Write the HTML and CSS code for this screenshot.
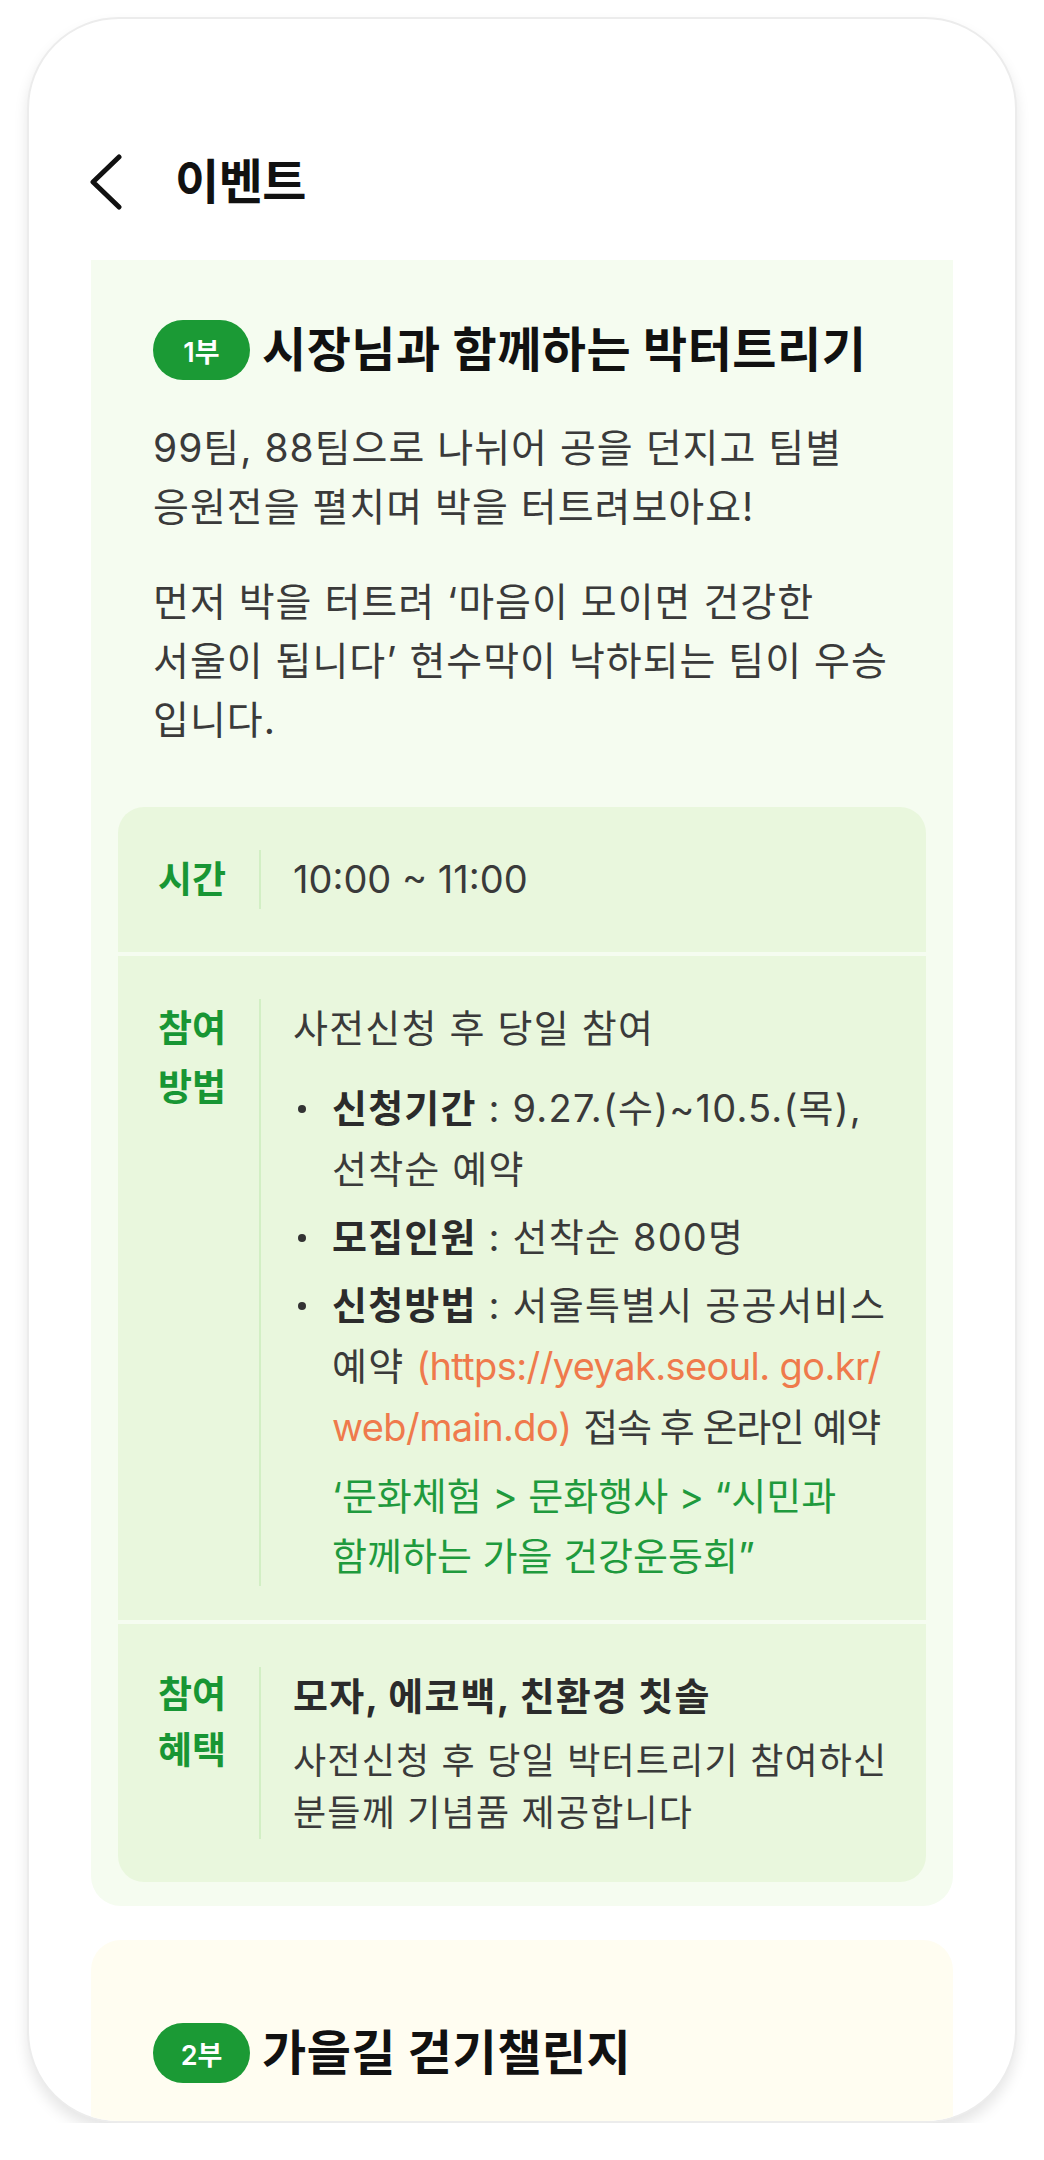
FILE: index.html
```html
<!DOCTYPE html>
<html lang="ko">
<head>
<meta charset="utf-8">
<title>이벤트</title>
<link rel="stylesheet" href="styles.css">
</head>
<body>
<div class="phone">
  <header class="topbar">
    <svg class="back" width="40" height="56" viewBox="0 0 40 56" aria-hidden="true">
      <path d="M33 3 L7 28 L33 53" fill="none" stroke="#111" stroke-width="5" stroke-linecap="round" stroke-linejoin="round"/>
    </svg>
    <h1 class="page-title">이벤트</h1>
  </header>
  <main class="content">
    <section class="card card-green">
      <div class="card-head">
        <span class="pill">1부</span>
        <h2 class="card-title">시장님과 함께하는 박터트리기</h2>
      </div>
      <div class="intro">
        <p>99팀, 88팀으로 나뉘어 공을 던지고 팀별<br>응원전을 펼치며 박을 터트려보아요!</p>
        <p>먼저 박을 터트려 ‘마음이 모이면 건강한<br>서울이 됩니다’ 현수막이 낙하되는 팀이 우승<br>입니다.</p>
      </div>
      <div class="info">
        <div class="info-row">
          <div class="info-label">시간</div>
          <div class="info-value"><span class="time">10:00 ~ 11:00</span></div>
        </div>
        <div class="info-row row-method">
          <div class="info-label">참여<br>방법</div>
          <div class="info-value">
            <p>사전신청 후 당일 참여</p>
            <ul class="bullets">
              <li><span class="dot"></span><span class="li-text"><b>신청기간</b> : 9.27.(수)~10.5.(목),<br>선착순 예약</span></li>
              <li><span class="dot"></span><span class="li-text"><b>모집인원</b> : 선착순 800명</span></li>
              <li><span class="dot"></span><span class="li-text"><b>신청방법</b> : 서울특별시 공공서비스<br>예약 <span class="url">(https://yeyak.seoul. go.kr/<br>web/main.do)</span> <span class="tight">접속 후 온라인 예약</span></span></li>
            </ul>
            <p class="note">‘문화체험 &gt; 문화행사 &gt; “시민과<br>함께하는 가을 건강운동회”</p>
          </div>
        </div>
        <div class="info-row">
          <div class="info-label label-tight">참여<br>혜택</div>
          <div class="info-value">
            <p class="benefit">모자, 에코백, 친환경 칫솔</p>
            <p class="benefit-desc">사전신청 후 당일 박터트리기 참여하신<br>분들께 기념품 제공합니다</p>
          </div>
        </div>
      </div>
    </section>
    <section class="card card-cream">
      <div class="card-head">
        <span class="pill">2부</span>
        <h2 class="card-title">가을길 걷기챌린지</h2>
      </div>
    </section>
  </main>
</div>
</body>
</html>
```

FILE: styles.css
```css
* { box-sizing: border-box; }

html, body {
  margin: 0;
  padding: 0;
  background: #ffffff;
}

body {
  font-family: Inter, "Noto Sans CJK KR", sans-serif;
  color: #333333;
  overflow: hidden;
}

.phone {
  width: 990px;
  height: 2106px;
  margin: 17px 0 0 27px;
  border: 2px solid #ececec;
  border-radius: 92px;
  background: #ffffff;
  overflow: hidden;
  box-shadow: 0 8px 14px rgba(0, 0, 0, 0.10);
}

.topbar {
  height: 241px;
  padding: 135px 0 0 57px;
  display: flex;
  align-items: flex-start;
  gap: 49px;
}

.back {
  display: block;
  flex: none;
}

.page-title {
  margin: 0;
  font-size: 48px;
  line-height: 56px;
  font-weight: 700;
  color: #111111;
  letter-spacing: -0.5px;
}

.content {
  padding: 0 62px;
  display: flex;
  flex-direction: column;
  gap: 34px;
}

.card {
  padding: 60px 27px 24px;
}

.card-green {
  background: #f5fcf0;
  border-radius: 0 0 30px 30px;
}

.card-cream {
  background: #fffdf1;
  border-radius: 30px;
  padding-top: 83px;
  padding-bottom: 200px;
}

.card-head {
  padding: 0 35px;
  display: flex;
  align-items: center;
  gap: 12px;
}

.pill {
  flex: none;
  width: 97px;
  height: 60px;
  border-radius: 30px;
  background: #1b9a35;
  color: #ffffff;
  font-size: 27px;
  font-weight: 600;
  display: flex;
  align-items: center;
  justify-content: center;
}

.card-title {
  margin: 0;
  font-size: 48px;
  line-height: 60px;
  font-weight: 700;
  color: #111111;
  letter-spacing: 0.5px;
}

.intro {
  padding: 0 35px;
  margin-top: 38px;
}

.intro p {
  margin: 0;
  font-size: 39px;
  line-height: 59px;
  letter-spacing: 1px;
  color: #3a3a3a;
  white-space: nowrap;
}

.intro p + p {
  margin-top: 36px;
}

.info {
  margin-top: 58px;
  display: flex;
  flex-direction: column;
  gap: 4px;
}

.info-row {
  background: #e9f7dd;
  padding: 43px 20px 43px 40px;
  display: flex;
}

.row-method {
  padding-bottom: 34px;
}

.info-row:first-child {
  border-radius: 26px 26px 0 0;
}

.info-row:last-child {
  border-radius: 0 0 26px 26px;
}

.info-label {
  flex: none;
  width: 101px;
  font-size: 37px;
  line-height: 59px;
  font-weight: 700;
  color: #189634;
}

.label-tight {
  line-height: 56px;
}

.info-value {
  flex: 1;
  border-left: 2px solid #d2efc4;
  padding-left: 32px;
  font-size: 38px;
  line-height: 59px;
  letter-spacing: 1.2px;
  color: #3a3a3a;
  white-space: nowrap;
}

.time {
  letter-spacing: 0;
}

.info-value p {
  margin: 0;
}

.bullets {
  list-style: none;
  margin: 20px 0 0;
  padding: 0;
}

.bullets li {
  display: flex;
  line-height: 61px;
}

.bullets li + li {
  margin-top: 7px;
}

.dot {
  flex: none;
  width: 8px;
  height: 8px;
  border-radius: 50%;
  background: #333333;
  margin: 27px 26px 0 5px;
}

.li-text b {
  font-weight: 700;
  color: #2b2b2b;
}

.url {
  color: #ef7a4c;
  letter-spacing: -0.6px;
}

.tight {
  letter-spacing: -1.4px;
}

.note {
  margin-top: 8px !important;
  padding-left: 39px;
  color: #1f9a3d;
  line-height: 60px;
  letter-spacing: 0;
}

.benefit {
  font-weight: 700;
  line-height: 58px;
  color: #2b2b2b;
}

.benefit-desc {
  margin-top: 10px !important;
  font-size: 36px;
  line-height: 52px;
}
```
